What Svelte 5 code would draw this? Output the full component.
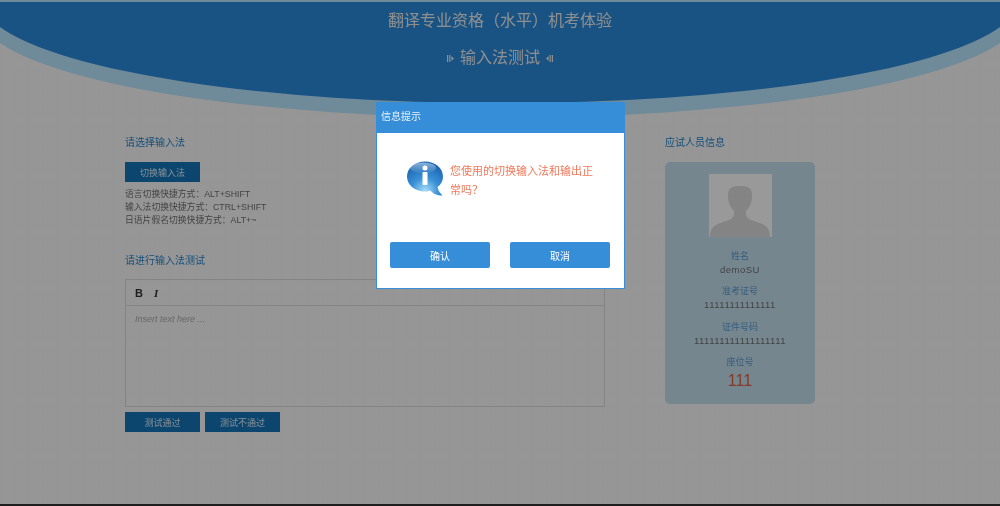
<script lang="ts">
  const shortcuts = [
    '语言切换快捷方式：ALT+SHIFT',
    '输入法切换快捷方式：CTRL+SHIFT',
    '日语片假名切换快捷方式：ALT+~'
  ];
  const info = [
    { label: '姓名', value: 'demoSU' },
    { label: '准考证号', value: '11111111111111' },
    { label: '证件号码', value: '111111111111111111' }
  ];
</script>

<div class="page">
  <div class="backdrop">
    <svg class="arc" viewBox="0 0 1000 125" aria-hidden="true">
      <path d="M0 0 L1000 0 L1000 43 A520 103 0 0 1 0 43 Z" fill="#b9e6ff" />
      <path d="M0 2 L1000 2 L1000 27 A518 103 0 0 1 0 27 Z" fill="#2a8ada" />
    </svg>

    <header class="head">
      <h1>翻译专业资格（水平）机考体验</h1>
      <h2>
        <svg class="deco" viewBox="0 0 7 9" aria-hidden="true">
          <path d="M0 1h1.200v7H0zM2.200 1h1.200v7H2.200zM4.400 2L7 4.500L4.400 7Z" fill="currentColor" />
        </svg>
        输入法测试
        <svg class="deco" viewBox="0 0 7 9" aria-hidden="true">
          <path d="M7 1h-1.200v7H7zM4.800 1h-1.200v7h1.200zM2.600 2L0 4.500L2.600 7Z" fill="currentColor" />
        </svg>
      </h2>
    </header>

    <main class="main">
      <section class="left">
        <h3>请选择输入法</h3>
        <button class="btn">切换输入法</button>
        <ul class="tips">
          {#each shortcuts as s}
            <li>{s}</li>
          {/each}
        </ul>
        <h3 class="second">请进行输入法测试</h3>
        <div class="editor">
          <div class="toolbar"><b>B</b><i>I</i></div>
          <div class="area">Insert text here ...</div>
        </div>
        <div class="actions">
          <button class="btn">测试通过</button>
          <button class="btn">测试不通过</button>
        </div>
      </section>

      <aside class="right">
        <h3>应试人员信息</h3>
        <div class="card">
          <svg class="photo" viewBox="0 0 63 63" aria-hidden="true">
            <rect width="63" height="63" fill="#fff" />
            <path d="M1 63 C1 54 5 51 14 48 C20 46 24 45 25 41 L25 37 C21 33 19 28 19 21 C19 14 23 12 31 12 C39 12 43 14 43 21 C43 28 41 33 37 37 L37 41 C38 45 42 46 48 48 C57 51 61 54 61 63 Z" fill="#dcdcdc" />
          </svg>
          {#each info as row}
            <div class="label">{row.label}</div>
            <div class="value">{row.value}</div>
          {/each}
          <div class="label">座位号</div>
          <div class="seat">111</div>
        </div>
      </aside>
    </main>

    <div class="foot"></div>
  </div>

  <div class="mask"></div>

  <div class="modal">
    <div class="modal-head">信息提示</div>
    <div class="modal-body">
      <svg class="bubble" viewBox="0 0 36 36" aria-hidden="true">
        <defs>
          <radialGradient id="ball" cx="50%" cy="85%" r="75%">
            <stop offset="0" stop-color="#a5dcf8" />
            <stop offset="0.5" stop-color="#3a90d6" />
            <stop offset="1" stop-color="#1f6ab5" />
          </radialGradient>
          <linearGradient id="shine" x1="0" y1="0" x2="0" y2="1">
            <stop offset="0" stop-color="#fff" stop-opacity="0.5" />
            <stop offset="1" stop-color="#fff" stop-opacity="0" />
          </linearGradient>
        </defs>
        <path d="M18 0.500 C28 0.500 36 7 36 15.500 C36 20 34 23.500 30.500 26 C31 29.500 33 32 35.500 34.500 C30 34.500 25.500 32.500 23.500 29.500 C21.500 30 20 30.500 18 30.500 C8 30.500 0 24 0 15.500 C0 7 8 0.500 18 0.500 Z" fill="url(#ball)" />
        <ellipse cx="16" cy="7" rx="13" ry="5.500" fill="url(#shine)" />
        <circle cx="18" cy="7" r="2.500" fill="#fff" />
        <rect x="15.500" y="11" width="5" height="13" rx="0.800" fill="#fff" />
      </svg>
      <p>您使用的切换输入法和输出正常吗？</p>
    </div>
    <div class="modal-foot">
      <button>确认</button>
      <button>取消</button>
    </div>
  </div>
</div>

<style>
  :global(body) {
    margin: 0;
  }

  .page {
    position: relative;
    width: 1000px;
    height: 506px;
    overflow: hidden;
    font-family: "Liberation Sans", "Noto Sans CJK SC", sans-serif;
  }

  .backdrop {
    position: relative;
    height: 506px;
    background-color: #fbfbfb;
    background-image:
      linear-gradient(#f8f8f8 1px, transparent 1px),
      linear-gradient(90deg, #f8f8f8 1px, transparent 1px);
    background-size: 14px 14px;
    color: #666;
    filter: blur(0.6px);
  }

  .arc {
    position: absolute;
    left: 0;
    top: 0;
    width: 1000px;
    height: 125px;
  }

  .head {
    position: relative;
    height: 136px;
    text-align: center;
    color: #eee;
  }
  .head h1 {
    margin: 0;
    padding-top: 9px;
    font-size: 16px;
    line-height: 23px;
    font-weight: 400;
  }
  .head h2 {
    display: flex;
    justify-content: center;
    align-items: center;
    gap: 6px;
    margin: 14px 0 0;
    font-size: 16px;
    line-height: 24px;
    font-weight: 400;
  }
  .deco {
    width: 7px;
    height: 9px;
  }

  .main {
    position: relative;
    display: flex;
    gap: 60px;
    padding-left: 125px;
  }
  .left {
    width: 480px;
  }
  .right {
    width: 150px;
  }

  h3 {
    margin: 0;
    font-size: 10px;
    line-height: 14px;
    font-weight: 400;
    color: #2585cc;
  }
  .second {
    margin-top: 27px;
  }

  .btn {
    display: block;
    width: 75px;
    height: 20px;
    padding: 0;
    border: 0;
    font: inherit;
    font-size: 9px;
    color: #dcebf6;
    background: #1476ba;
  }
  .left > .btn {
    margin-top: 12px;
  }

  .tips {
    margin: 6px 0 0;
    padding: 0;
    list-style: none;
    font-size: 8.8px;
    line-height: 13px;
    color: #707070;
  }

  .editor {
    margin-top: 11px;
    height: 128px;
    border: 1px solid #ddd;
    box-sizing: border-box;
  }
  .toolbar {
    display: flex;
    align-items: center;
    gap: 11px;
    height: 25px;
    padding-left: 9px;
    border-bottom: 1px solid #ddd;
    font-size: 11px;
    color: #333;
  }
  .toolbar i {
    font-family: "Liberation Serif", serif;
    font-weight: 700;
  }
  .area {
    padding: 8px 9px;
    font-size: 9px;
    font-style: italic;
    color: #aaa;
  }

  .actions {
    display: flex;
    gap: 5px;
    margin-top: 5px;
  }

  .card {
    display: flex;
    flex-direction: column;
    align-items: center;
    width: 150px;
    height: 242px;
    margin-top: 12px;
    padding-top: 12px;
    box-sizing: border-box;
    border-radius: 5px;
    background: #c4dfef;
  }
  .photo {
    width: 63px;
    height: 63px;
    margin-bottom: 3px;
  }
  .label {
    margin-top: 9.500px;
    font-size: 9px;
    line-height: 13px;
    color: #5b9bd0;
  }
  .value {
    font-size: 9.500px;
    line-height: 13px;
    letter-spacing: 0.5px;
    color: #707070;
  }
  .seat {
    font-size: 16px;
    line-height: 23px;
    color: #e06040;
  }

  .foot {
    position: absolute;
    left: 0;
    right: 0;
    bottom: 0;
    height: 2px;
    background: #333;
  }

  .mask {
    position: absolute;
    inset: 0;
    background: rgba(0, 0, 0, 0.4);
  }

  .modal {
    position: absolute;
    left: 376px;
    top: 102px;
    width: 249px;
    height: 187px;
    box-sizing: border-box;
    border: 1px solid #368dd8;
    border-top: 0;
    background: #fff;
    filter: blur(0.5px);
  }
  .modal-head {
    height: 31px;
    padding-left: 4px;
    font-size: 10px;
    line-height: 30px;
    color: #e8f3fc;
    background: #368dd8;
  }
  .modal-body {
    display: flex;
    align-items: flex-start;
    gap: 7px;
    height: 109px;
    padding: 28px 0 0 30px;
    box-sizing: border-box;
  }
  .bubble {
    flex: none;
    width: 36px;
    height: 36px;
  }
  .modal-body p {
    width: 146px;
    margin: 0;
    padding-top: 1px;
    font-size: 11px;
    line-height: 19px;
    color: #f0785a;
  }
  .modal-foot {
    display: flex;
    gap: 20px;
    padding-left: 13px;
  }
  .modal-foot button {
    width: 100px;
    height: 26px;
    padding: 0;
    border: 0;
    border-radius: 2px;
    font: inherit;
    font-size: 10px;
    color: #fff;
    background: #368dd8;
  }
</style>
